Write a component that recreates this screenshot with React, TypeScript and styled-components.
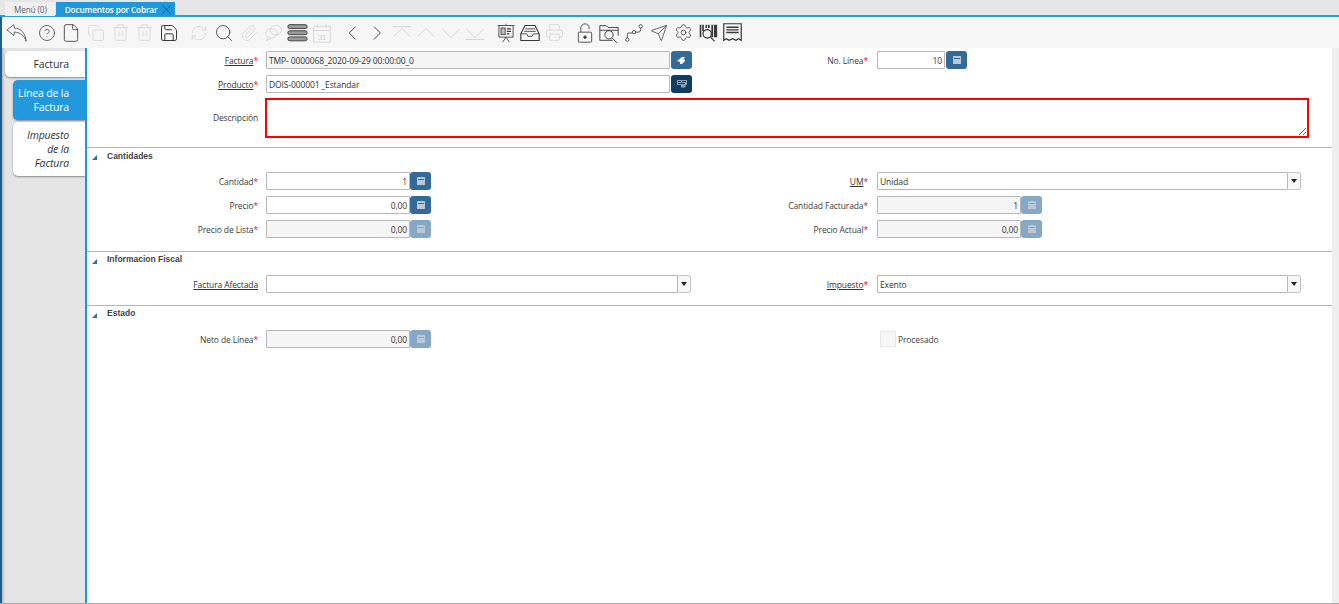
import React from 'react'
import styled, { createGlobalStyle } from 'styled-components'
import { ChevronLeft, ChevronRight, CircleHelp, Copy, File, Printer, RefreshCw, Save, Search, Send, Settings, Trash2, X, Paperclip } from 'lucide-react'

const GlobalStyle = createGlobalStyle`
  html, body { margin: 0; padding: 0; height: 100%; background: #fff; overflow: hidden; }
  body { font-family: 'Open Sans', 'Noto Sans', sans-serif; font-size: 8.5px; letter-spacing: -0.12px; color: #3a3a3a; }
  * { box-sizing: border-box; }
`

const Page = styled.div`
  width: 1339px;
  height: 604px;
  display: flex;
  flex-direction: column;
`

const TabBar = styled.div`
  height: 17px;
  flex: none;
  display: flex;
  align-items: flex-start;
  gap: 1px;
  padding: 2px 0 0 5px;
  background: #e6e6e6;
  border-bottom: 2px solid #2f9bd9;
`

const WinTab = styled.div<{ $active?: boolean }>`
  height: 14px;
  display: flex;
  align-items: center;
  gap: 1px;
  padding: ${p => (p.$active ? '0 0 0 9px' : '0 8px 0 9px')};
  font-size: 8.2px;
  font-weight: ${p => (p.$active ? 600 : 400)};
  color: ${p => (p.$active ? '#fff' : '#666')};
  background: ${p => (p.$active ? '#1f97dd' : '#f0f0f0')};
`

const Toolbar = styled.div`
  height: 31px;
  flex: none;
  display: flex;
  align-items: center;
  padding-left: 2px;
  background: #f6f6f6;
  border-left: 2px solid #1b5f92;
`

const Tool = styled.div<{ $off?: boolean; $ml?: number }>`
  width: 24.6px;
  height: 24px;
  flex: none;
  display: flex;
  align-items: center;
  justify-content: center;
  margin-left: ${p => p.$ml ?? 0}px;
  color: ${p => (p.$off ? '#d2d2d2' : '#3a3a3a')};
`

const Body = styled.div`
  flex: 1;
  min-height: 0;
  display: flex;
  border-bottom: 1px solid #aaa;
`

const Side = styled.div`
  width: 87px;
  flex: none;
  display: flex;
  flex-direction: column;
  align-items: flex-end;
  padding-top: 3px;
  background: #e5e5e5;
  border-left: 2px solid #1b5f92;
  border-right: 2px solid #0f9ade;
  box-shadow: inset 3px 0 3px -2px #aaa;
`

const SideTab = styled.div<{ $state: 'first' | 'active' | 'plain' }>`
  width: ${p => (p.$state === 'first' ? '80px' : '72px')};
  margin-bottom: ${p => (p.$state === 'first' ? '3px' : '2px')};
  padding: 6px 16px 6px 2px;
  text-align: right;
  font-size: 10.5px;
  letter-spacing: -0.15px;
  line-height: 14px;
  border-radius: 5px 0 0 5px;
  font-style: ${p => (p.$state === 'plain' ? 'italic' : 'normal')};
  color: ${p => (p.$state === 'active' ? '#fff' : '#333')};
  background: ${p => (p.$state === 'active' ? '#2298dd' : '#fff')};
  box-shadow: 0 1px 2px #888;
`

const Form = styled.div`
  flex: 1;
  min-width: 0;
  padding-top: 3px;
`

const ScrollGutter = styled.div`
  width: 7px;
  flex: none;
  background: #eee;
`

const Row = styled.div`
  display: grid;
  grid-template-columns: 179px 434px 177px 1fr;
  height: 18px;
  margin-bottom: 6px;
  align-items: center;
`

const TallRow = styled(Row)`
  height: 40px;
  margin: -2px 0 10px;
`

const Label = styled.div<{ $right?: boolean }>`
  text-align: right;
  white-space: nowrap;
  padding-right: ${p => (p.$right ? '9px' : '8px')};
  color: #3c3c3c;
`

const LinkText = styled.span`
  text-decoration: underline;
  color: #333;
`

const Star = styled.span`
  color: #e8101c;
`

const Control = styled.div`
  display: flex;
  align-items: stretch;
  height: 18px;
`

const TextInput = styled.input<{ $w: number; $num?: boolean }>`
  width: ${p => p.$w}px;
  height: 18px;
  flex: none;
  padding: 0 2px;
  font: inherit;
  letter-spacing: inherit;
  color: #333;
  text-align: ${p => (p.$num ? 'right' : 'left')};
  border: 1px solid #b8b8b8;
  border-radius: 1px;
  outline: none;
  background: ${p => (p.readOnly ? '#f5f5f5' : '#fff')};
`

const MemoInput = styled.textarea`
  display: block;
  width: 1044px;
  height: 40px;
  margin-left: -1px;
  margin-top: 1px;
  border: 2px solid #f00;
  outline: none;
  grid-column: 2 / 5;
  background: #fff;
`

const FieldButton = styled.div<{ $tone?: 'dark' | 'off'; $flush?: boolean }>`
  width: 21px;
  height: 18px;
  flex: none;
  margin-left: ${p => (p.$flush ? 0 : 1)}px;
  display: flex;
  align-items: center;
  justify-content: center;
  border-radius: 3px;
  background: ${p => (p.$tone === 'dark' ? '#0e3c62' : p.$tone === 'off' ? '#86a8c5' : '#336a99')};
  color: #b9c9d8;
`

const Combo = styled.div`
  width: 13px;
  height: 18px;
  flex: none;
  display: flex;
  align-items: center;
  justify-content: center;
  background: #f7f7f7;
  border: 1px solid #c4c4c4;
  border-left: 0;
  border-radius: 0 3px 3px 0;
  &::after {
    content: '';
    border: 3px solid transparent;
    border-top: 4px solid #222;
    border-bottom: 0;
  }
`

const Section = styled.div<{ $pad: number }>`
  border-top: 1px solid #b5b5b5;
  padding-bottom: ${p => p.$pad}px;
`

const SectionHead = styled.div<{ $h: number; $top?: number }>`
  position: relative;
  height: ${p => p.$h}px;
  padding: ${p => p.$top ?? 1}px 0 0 20px;
  line-height: 12px;
  font-family: 'Liberation Sans', Arial, sans-serif;
  font-size: 8.5px;
  letter-spacing: 0;
  font-weight: 700;
  color: #444;
  &::before {
    content: '';
    position: absolute;
    left: 5px;
    top: 7px;
    border-style: solid;
    border-width: 0 0 5px 5px;
    border-color: transparent transparent #2a6fb0 transparent;
  }
`

const CheckField = styled.div`
  display: flex;
  align-items: center;
  gap: 2px;
  padding-left: 3px;
  color: #444;
`

const CheckBox = styled.div`
  width: 16px;
  height: 16px;
  background: #f7f7f7;
  border: 1px solid #e6e6e6;
  border-radius: 2px;
`

const Line = styled.svg.attrs({ viewBox: '0 0 24 24', fill: 'none', stroke: 'currentColor', strokeWidth: 1 })`
  display: block;
`

const Undo = () => (
  <Line width='21' height='21' strokeWidth={1.4} style={{ color: '#555' }}>
    <path d='M1 9l8-6 .5 4c7 0 12.500 5 13.500 15-2-6-6-10-13.500-10.500L9 15.500z' />
  </Line>
)

const Bubbles = () => (
  <Line width='19' height='19'>
    <ellipse cx='9.5' cy='13' rx='7.5' ry='6' />
    <ellipse cx='15' cy='9' rx='7' ry='6' />
    <path d='M5 18l-2 4 5-2' />
  </Line>
)

const Rows = () => (
  <Line width='21' height='21' strokeWidth={1.5} style={{ color: '#333' }}>
    <rect x='1' y='3' width='22' height='4.5' rx='2' fill='#999' />
    <rect x='1' y='10' width='22' height='4.5' rx='2' fill='#999' />
    <rect x='1' y='17' width='22' height='4.5' rx='2' fill='#999' />
  </Line>
)

const CalendarDay = () => (
  <Line width='20' height='20'>
    <path d='M2 4h20v19H2zM2 9h20M7 1v5M17 1v5' />
    <text x='12' y='20' fontSize='9' fill='currentColor' stroke='none' textAnchor='middle' fontFamily='Liberation Sans, sans-serif'>31</text>
  </Line>
)

const BarChevron = ({ dir, bar }: { dir: 'up' | 'down'; bar?: boolean }) => (
  <Line width='22' height='22'>
    {dir === 'up' ? <path d='M3 16l9-9 9 9' /> : <path d='M3 8l9 9 9-9' />}
    {bar && (dir === 'up' ? <path d='M2 5h20' /> : <path d='M2 19h20' />)}
  </Line>
)

const Board = () => (
  <Line width='20' height='20'>
    <path d='M2 3h20M3.500 3v14h17V3M12 1v2M12 17l-4 6M12 17l4 6' />
    <rect x='6' y='6' width='5' height='8' fill='currentColor' fillOpacity='.3' />
    <path d='M13 7h5M13 10h5M13 13h3' strokeWidth={1.5} />
  </Line>
)

const Tray = () => (
  <Line width='20' height='20'>
    <path d='M6 3h12l5 10v8H1v-8z' strokeWidth={1.4} />
    <path d='M1 13h7l1.500 3h5l1.500-3h7M6 7h12M5 10h14' />
  </Line>
)

const Padlock = () => (
  <Line width='20' height='20' strokeWidth={1.4}>
    <rect x='4' y='11' width='16' height='12' rx='1' />
    <path d='M7 11V6a5 5 0 0 1 10 0v1' />
    <circle cx='12' cy='17' r='1.500' fill='currentColor' />
  </Line>
)

const FolderFind = () => (
  <Line width='22' height='22'>
    <path d='M16 20H2V4h7l2 2h11v9' />
    <path d='M2 9h20' />
    <circle cx='12' cy='14' r='4.500' />
    <path d='M15.500 17.500L21 23' />
  </Line>
)

const Route = () => (
  <Line width='20' height='20'>
    <circle cx='4' cy='20' r='2' />
    <circle cx='12' cy='11' r='2' />
    <circle cx='20' cy='4' r='2' />
    <path d='M4 18v-4q0-2 2-2h4M14 11h3q3 0 3-3V6' />
  </Line>
)

const BarcodeFind = () => (
  <Line width='20' height='20'>
    <path d='M3 2v15M6 2v8M10 2v4M13 2v4M17 2v15M20 2v15M22 2v15' strokeWidth={2} />
    <circle cx='11' cy='13' r='5' fill='#f6f6f6' strokeWidth={1.5} />
    <path d='M15 17l5 5' strokeWidth={1.5} />
  </Line>
)

const Receipt = () => (
  <Line width='21' height='21'>
    <path d='M2 2h20v19l-3-2-3 2-4-2-4 2-3-2-3 2z' strokeWidth={1.4} />
    <path d='M5 6h14M5 9h14M5 12h14' strokeWidth={1.6} />
  </Line>
)

const CalcIcon = () => (
  <svg width='8' height='8' viewBox='0 0 8 8' fill='currentColor'>
    <path d='M.5 0h7a.5.5 0 0 1 .5.500v7a.5.5 0 0 1-.5.500h-7a.5.5 0 0 1-.5-.500v-7A.5.5 0 0 1 .5 0zM1 2v1h6V2z' fillRule='evenodd' />
  </svg>
)

const BackIcon = () => (
  <svg width='9' height='9' viewBox='0 0 9 9' fill='#fff'>
    <path d='M0 5l5-4h3L6 3.500h2V5L5 8H3V6z' />
  </svg>
)

const CardIcon = () => (
  <svg width='10' height='8' viewBox='0 0 10 8' fill='currentColor' opacity='.7'>
    <path d='M0 0h10v5H8.500v2.500H4V5H0zm1 1v1h3V1zm4 0v1h4V1zM1 3v1h7V3z' fillRule='evenodd' />
  </svg>
)

type NumFieldProps = { value: string; off?: boolean }

const NumField = ({ value, off }: NumFieldProps) => (
  <Control>
    <TextInput $w={144} $num readOnly={off} value={value} onChange={() => {}} />
    <FieldButton $flush $tone={off ? 'off' : undefined}><CalcIcon /></FieldButton>
  </Control>
)

const Mandatory = ({ text, link }: { text: string; link?: boolean }) => (
  <>
    {link ? <LinkText>{text}</LinkText> : text}
    <Star>*</Star>
  </>
)

export default function App () {
  return (
    <Page>
      <GlobalStyle />
      <TabBar>
        <WinTab>Menú (0)</WinTab>
        <WinTab $active>
          Documentos por Cobrar
          <X size={17} strokeWidth={1} color='#1c4a6e' />
        </WinTab>
      </TabBar>
      <Toolbar>
        <Tool><Undo /></Tool>
        <Tool $ml={6.5}><CircleHelp size={18} strokeWidth={1} /></Tool>
        <Tool $ml={-1}><File size={20} strokeWidth={1} /></Tool>
        <Tool $off><Copy size={18} strokeWidth={1} /></Tool>
        <Tool $off><Trash2 size={19} strokeWidth={1} /></Tool>
        <Tool $off><Trash2 size={19} strokeWidth={1} /></Tool>
        <Tool><Save size={20} strokeWidth={1.2} /></Tool>
        <Tool $off $ml={5.5}><RefreshCw size={18} strokeWidth={1} /></Tool>
        <Tool><Search size={20} strokeWidth={1} /></Tool>
        <Tool $off><Paperclip size={18} strokeWidth={1} /></Tool>
        <Tool $off><Bubbles /></Tool>
        <Tool><Rows /></Tool>
        <Tool $off><CalendarDay /></Tool>
        <Tool $ml={5.5}><ChevronLeft size={28} strokeWidth={0.9} /></Tool>
        <Tool><ChevronRight size={28} strokeWidth={0.9} /></Tool>
        <Tool $off><BarChevron dir='up' bar /></Tool>
        <Tool $off><BarChevron dir='up' /></Tool>
        <Tool $off><BarChevron dir='down' /></Tool>
        <Tool $off><BarChevron dir='down' bar /></Tool>
        <Tool $ml={5.5}><Board /></Tool>
        <Tool><Tray /></Tool>
        <Tool $off><Printer size={19} strokeWidth={1} /></Tool>
        <Tool $ml={5.5}><Padlock /></Tool>
        <Tool><FolderFind /></Tool>
        <Tool><Route /></Tool>
        <Tool><Send size={18} strokeWidth={1} /></Tool>
        <Tool><Settings size={19} strokeWidth={1} /></Tool>
        <Tool><BarcodeFind /></Tool>
        <Tool><Receipt /></Tool>
      </Toolbar>
      <Body>
        <Side>
          <SideTab $state='first'>Factura</SideTab>
          <SideTab $state='active'>Línea de la Factura</SideTab>
          <SideTab $state='plain'>Impuesto de la Factura</SideTab>
        </Side>
        <Form>
          <Row>
            <Label><Mandatory text='Factura' link /></Label>
            <Control>
              <TextInput $w={404} readOnly value='TMP- 0000068_2020-09-29 00:00:00_0' />
              <FieldButton><BackIcon /></FieldButton>
            </Control>
            <Label $right><Mandatory text='No. Línea' /></Label>
            <Control>
              <TextInput $w={68} $num value='10' onChange={() => {}} />
              <FieldButton><CalcIcon /></FieldButton>
            </Control>
          </Row>
          <Row>
            <Label><Mandatory text='Producto' link /></Label>
            <Control>
              <TextInput $w={404} value='DOIS-000001 _Estandar' onChange={() => {}} />
              <FieldButton $tone='dark'><CardIcon /></FieldButton>
            </Control>
          </Row>
          <TallRow>
            <Label>Descripción</Label>
            <MemoInput />
          </TallRow>
          <Section $pad={7}>
            <SectionHead $h={24} $top={2}>Cantidades</SectionHead>
            <Row>
              <Label><Mandatory text='Cantidad' /></Label>
              <NumField value='1' />
              <Label $right><Mandatory text='UM' link /></Label>
              <Control>
                <TextInput $w={411} value='Unidad' onChange={() => {}} />
                <Combo />
              </Control>
            </Row>
            <Row>
              <Label><Mandatory text='Precio' /></Label>
              <NumField value='0,00' />
              <Label $right><Mandatory text='Cantidad Facturada' /></Label>
              <NumField value='1' off />
            </Row>
            <Row>
              <Label><Mandatory text='Precio de Lista' /></Label>
              <NumField value='0,00' off />
              <Label $right><Mandatory text='Precio Actual' /></Label>
              <NumField value='0,00' off />
            </Row>
          </Section>
          <Section $pad={6}>
            <SectionHead $h={23}>Informacion Fiscal</SectionHead>
            <Row>
              <Label><LinkText>Factura Afectada</LinkText></Label>
              <Control>
                <TextInput $w={412} value='' onChange={() => {}} />
                <Combo />
              </Control>
              <Label $right><Mandatory text='Impuesto' link /></Label>
              <Control>
                <TextInput $w={411} value='Exento' onChange={() => {}} />
                <Combo />
              </Control>
            </Row>
          </Section>
          <Section $pad={0}>
            <SectionHead $h={24}>Estado</SectionHead>
            <Row>
              <Label><Mandatory text='Neto de Línea' /></Label>
              <NumField value='0,00' off />
              <span />
              <CheckField>
                <CheckBox />
                Procesado
              </CheckField>
            </Row>
          </Section>
        </Form>
        <ScrollGutter />
      </Body>
    </Page>
  )
}
